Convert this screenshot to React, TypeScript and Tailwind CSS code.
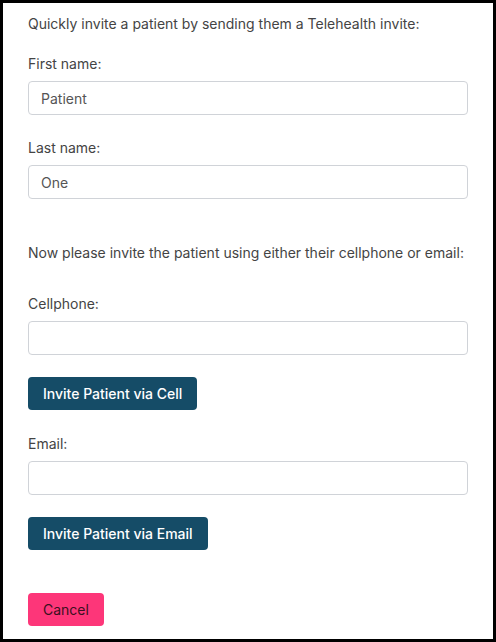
import React from "react";

function Field({ label, value, className }: { label: string; value?: string; className?: string }) {
  return (
    <div className={className}>
      <label className="block text-[14px] leading-[20px] text-[#444]">{label}</label>
      <input
        defaultValue={value}
        className="mt-[7px] block h-[34px] w-full rounded-[4px] border border-[#d0d3d8] bg-white px-[12px] text-[14px] text-[#555] outline-none"
        style={{ fontFamily: "Inter, 'Noto Sans', sans-serif" }}
      />
    </div>
  );
}

export default function App() {
  return (
    <div
      className="box-border h-[642px] w-[496px] border-[3px] border-black bg-white pl-[25px] pr-[25px] pt-[11px]"
      style={{ fontFamily: "Inter, 'Noto Sans', sans-serif" }}
    >
      <p className="text-[14px] leading-[20px] text-[#444]">
        Quickly invite a patient by sending them a Telehealth invite:
      </p>
      <Field label="First name:" value="Patient" className="mt-[20px]" />
      <Field label="Last name:" value="One" className="mt-[23px]" />
      <p className="mt-[44px] text-[14px] leading-[20px] text-[#444]">
        Now please invite the patient using either their cellphone or email:
      </p>
      <Field label="Cellphone:" className="mt-[31px]" />
      <button className="mt-[22px] block h-[33px] rounded-[4px] bg-[#154c67] px-[15px] text-[14px] font-medium text-white">
        Invite Patient via Cell
      </button>
      <Field label="Email:" className="mt-[24px]" />
      <button className="mt-[22px] block h-[33px] rounded-[4px] bg-[#154c67] px-[15px] text-[14px] font-medium text-white">
        Invite Patient via Email
      </button>
      <button className="mt-[43px] block h-[33px] rounded-[4px] bg-[#fd3679] px-[15px] text-[14px] text-[#3a1020]">
        Cancel
      </button>
    </div>
  );
}
